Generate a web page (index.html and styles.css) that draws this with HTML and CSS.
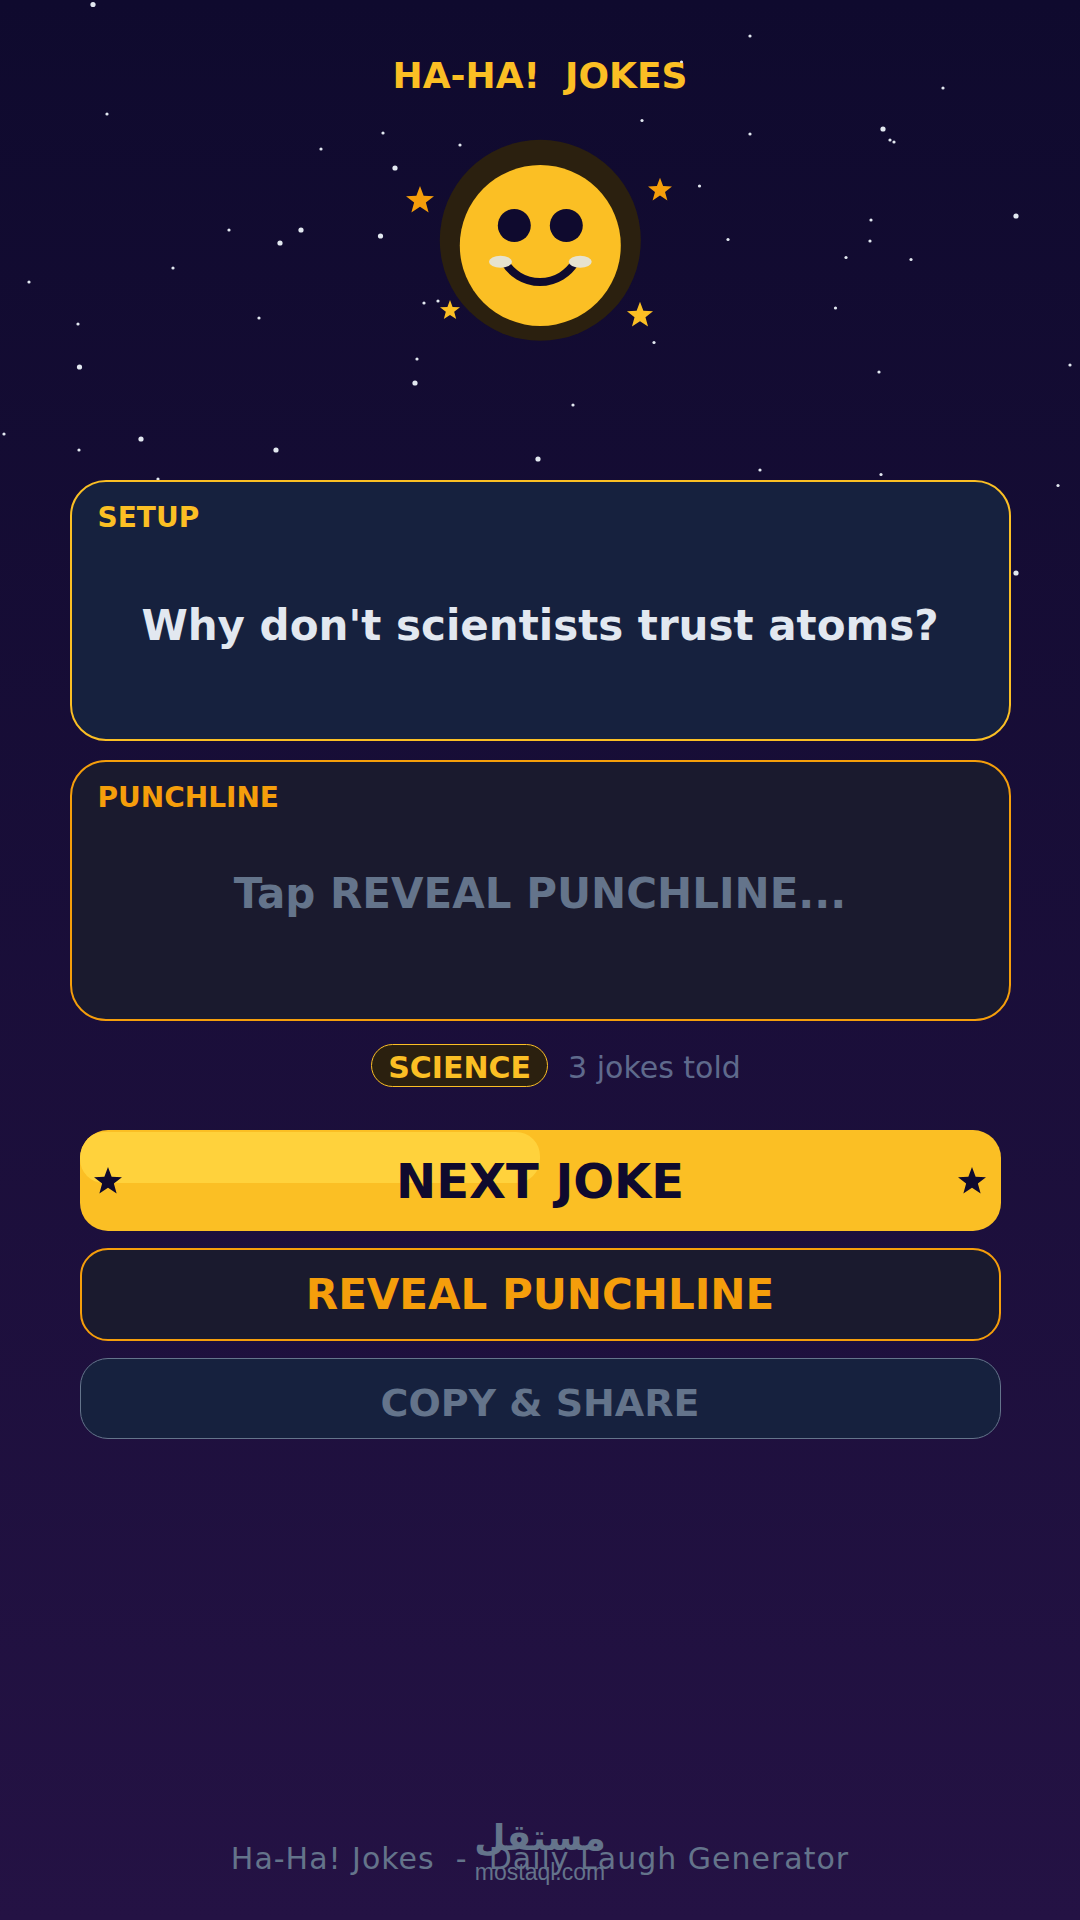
FILE: index.html
```html
<!DOCTYPE html>
<html lang="en">
<head>
<meta charset="utf-8">
<title>Ha-Ha! Jokes</title>
<link rel="stylesheet" href="styles.css">
</head>
<body>
<svg class="defs" width="0" height="0" aria-hidden="true">
  <defs>
    <path id="star" d="M0-100 24.7-34 95.1-30.9 39.9 13 58.8 80.9 0 42-58.8 80.9-39.9 13-95.1-30.9-24.7-34Z"/>
  </defs>
</svg>
<main class="page">
  <svg class="sky" viewBox="0 0 1080 1920" aria-hidden="true">
    <g class="sky-big">
      <circle cx="93" cy="4.5" r="2.6"/><circle cx="395" cy="168" r="2.6"/><circle cx="301" cy="230" r="2.6"/>
      <circle cx="280" cy="243" r="2.6"/><circle cx="380.5" cy="236" r="2.6"/><circle cx="79.5" cy="367" r="2.6"/>
      <circle cx="415" cy="383" r="2.6"/><circle cx="141" cy="439" r="2.6"/><circle cx="276" cy="450" r="2.6"/>
      <circle cx="538" cy="459" r="2.6"/><circle cx="883" cy="129" r="2.6"/><circle cx="1016" cy="216" r="2.6"/>
      <circle cx="1016" cy="573" r="2.6"/>
    </g>
    <g class="sky-small">
      <circle cx="107" cy="114"/><circle cx="383" cy="133"/><circle cx="321" cy="149"/><circle cx="460" cy="145"/>
      <circle cx="229" cy="230"/><circle cx="173" cy="268"/><circle cx="29" cy="282"/><circle cx="78" cy="324"/>
      <circle cx="259" cy="318"/><circle cx="424" cy="303"/><circle cx="438" cy="301"/><circle cx="417" cy="359"/>
      <circle cx="4" cy="434"/><circle cx="79" cy="450"/><circle cx="158" cy="479"/><circle cx="750" cy="36"/>
      <circle cx="681.5" cy="62"/><circle cx="943" cy="88"/><circle cx="642" cy="120.5"/><circle cx="750" cy="134"/>
      <circle cx="890" cy="140"/><circle cx="894" cy="142"/><circle cx="699.5" cy="186"/><circle cx="728" cy="239.5"/>
      <circle cx="871" cy="220"/><circle cx="870" cy="241"/><circle cx="846" cy="257.5"/><circle cx="911" cy="259.5"/>
      <circle cx="835.5" cy="308"/><circle cx="654" cy="342.5"/><circle cx="573" cy="405"/><circle cx="879" cy="372"/>
      <circle cx="1070" cy="365"/><circle cx="760" cy="470"/><circle cx="881" cy="474.5"/><circle cx="1058" cy="485.5"/>
    </g>
  </svg>

  <h1 class="title">HA-HA!&nbsp; JOKES</h1>

  <svg class="hero" viewBox="370 130 340 220" aria-hidden="true">
    <circle class="face-ring" cx="540.3" cy="240.3" r="100.5"/>
    <circle class="face" cx="540.3" cy="245.5" r="80.5"/>
    <circle class="eye" cx="514.3" cy="225.5" r="16.5"/>
    <circle class="eye" cx="566.3" cy="225.5" r="16.5"/>
    <path class="mouth" d="M505 262.4A41 41 0 0 0 575 262.4"/>
    <ellipse class="cheek" cx="500.5" cy="261.7" rx="11.5" ry="6"/>
    <ellipse class="cheek" cx="580.2" cy="261.7" rx="11.5" ry="6"/>
    <use href="#star" class="star-orange" transform="translate(420 200.7) scale(.147)"/>
    <use href="#star" class="star-orange" transform="translate(660 190.3) scale(.126)"/>
    <use href="#star" class="star-yellow" transform="translate(450 310.5) scale(.105)"/>
    <use href="#star" class="star-yellow" transform="translate(640 315.4) scale(.137)"/>
  </svg>

  <section class="card card-setup">
    <div class="card-label">SETUP</div>
    <div class="card-body">Why don't scientists trust atoms?</div>
  </section>
  <section class="card card-punch">
    <div class="card-label">PUNCHLINE</div>
    <div class="card-body">Tap REVEAL PUNCHLINE...</div>
  </section>

  <div class="meta">
    <span class="badge">SCIENCE</span>
    <span class="count">3 jokes told</span>
  </div>

  <div class="actions">
    <button class="btn btn-next" type="button">
      <svg class="btn-star" viewBox="-14 -14.7 28 28" aria-hidden="true"><use href="#star" transform="scale(.147)"/></svg>
      <span class="btn-text">NEXT JOKE</span>
      <svg class="btn-star" viewBox="-14 -14.7 28 28" aria-hidden="true"><use href="#star" transform="scale(.147)"/></svg>
    </button>
    <button class="btn btn-reveal" type="button">REVEAL PUNCHLINE</button>
    <button class="btn btn-copy" type="button">COPY &amp; SHARE</button>
  </div>

  <footer class="footer">Ha-Ha! Jokes&nbsp; -&nbsp; Daily Laugh Generator</footer>
  <div class="mark"><span class="mark-ar">مستقل</span><span class="mark-en">mostaql.com</span></div>
</main>
</body>
</html>
```

FILE: styles.css
```css
* { box-sizing: border-box; }
html, body { margin: 0; padding: 0; }
body {
  width: 1080px;
  height: 1920px;
  overflow: hidden;
  font-family: "DejaVu Sans", sans-serif;
}
.defs { position: absolute; }
.page {
  position: relative;
  width: 1080px;
  height: 1920px;
  display: flex;
  flex-direction: column;
  align-items: center;
  background: linear-gradient(180deg, #0f0a2e 0%, #241244 100%);
}
.sky { position: absolute; left: 0; top: 0; width: 1080px; height: 1920px; }
.sky-big circle { fill: #e2e8f0; }
.sky-small circle { fill: #e2e8f0; r: 1.6px; }

.title {
  position: relative;
  margin: 54px 0 0;
  font-size: 36px;
  line-height: 44px;
  font-weight: 700;
  color: #fbbf24;
  white-space: pre;
}
.hero {
  position: relative;
  display: block;
  width: 340px;
  height: 220px;
  margin-top: 32px;
}
.face-ring { fill: #2b200f; }
.face { fill: #fbbf24; }
.eye { fill: #0f0a2e; }
.mouth { fill: none; stroke: #0f0a2e; stroke-width: 8; }
.cheek { fill: #e6e2cf; }
.star-orange { fill: #f59e0b; }
.star-yellow { fill: #fbbf24; }

.card {
  position: relative;
  width: 941px;
  height: 261px;
  padding: 21px 26px;
  border: 2px solid;
  border-radius: 36px;
  display: flex;
  flex-direction: column;
}
.card-setup { margin-top: 130px; background: #16213e; border-color: #fbbf24; color: #fbbf24; }
.card-punch { margin-top: 19px; padding-bottom: 45px; background: #1a1a2e; border-color: #f59e0b; color: #f59e0b; }
.card-label {
  font-size: 28px;
  line-height: 30px;
  font-weight: 700;
}
.card-body {
  flex: 1;
  display: flex;
  align-items: center;
  justify-content: center;
  font-size: 42px;
  font-weight: 700;
  white-space: nowrap;
}
.card-setup .card-body { color: #e2e8f0; }
.card-punch .card-body { color: #64748b; }

.meta {
  position: relative;
  display: flex;
  align-items: center;
  gap: 20px;
  margin-top: 23px;
  padding-left: 32px;
}
.badge {
  padding: 3px 16px 0;
  height: 43px;
  display: flex;
  align-items: center;
  border: 1px solid #fbbf24;
  border-radius: 22px;
  background: #2b200f;
  color: #fbbf24;
  font-size: 30px;
  font-weight: 700;
}
.count { padding-top: 5px; font-size: 30px; line-height: 34px; color: #5f6a8c; }

.actions {
  position: relative;
  width: 921px;
  display: flex;
  flex-direction: column;
  gap: 17px;
  margin-top: 43px;
}
.btn {
  display: block;
  width: 100%;
  padding: 0;
  border-radius: 28px;
  font-family: "DejaVu Sans", sans-serif;
  font-weight: 700;
  white-space: nowrap;
}
.btn-next {
  position: relative;
  height: 101px;
  display: flex;
  align-items: center;
  justify-content: space-between;
  padding: 0 14px;
  border: 0;
  background: #fbbf24;
  color: #0f0a2e;
  font-size: 48px;
  overflow: hidden;
}
.btn-next::before {
  content: "";
  position: absolute;
  left: 0;
  top: 2px;
  width: 460px;
  height: 51px;
  border-radius: 24px;
  background: #ffd23c;
}
.btn-text, .btn-star { position: relative; }
.btn-star { width: 28px; height: 28px; fill: #0f0a2e; flex: none; }
.btn-reveal {
  height: 93px;
  border: 2px solid #f59e0b;
  background: #1a1a2e;
  color: #f59e0b;
  font-size: 42px;
}
.btn-copy {
  height: 81px;
  padding-top: 9px;
  border: 1px solid #64748b;
  background: #16213e;
  color: #64748b;
  font-size: 38px;
}
.footer {
  position: absolute;
  left: 0;
  right: 0;
  bottom: 43px;
  text-align: center;
  font-size: 30px;
  line-height: 36px;
  letter-spacing: 1px;
  color: #64748b;
  white-space: pre;
}
.mark {
  position: absolute;
  left: 475px;
  top: 1815px;
  width: 130px;
  display: flex;
  flex-direction: column;
  align-items: center;
  color: #64748b;
}
.mark-ar { font-size: 36px; line-height: 46px; font-weight: 700; }
.mark-en { font-family: "Liberation Sans", sans-serif; font-size: 23px; line-height: 22px; }
```
